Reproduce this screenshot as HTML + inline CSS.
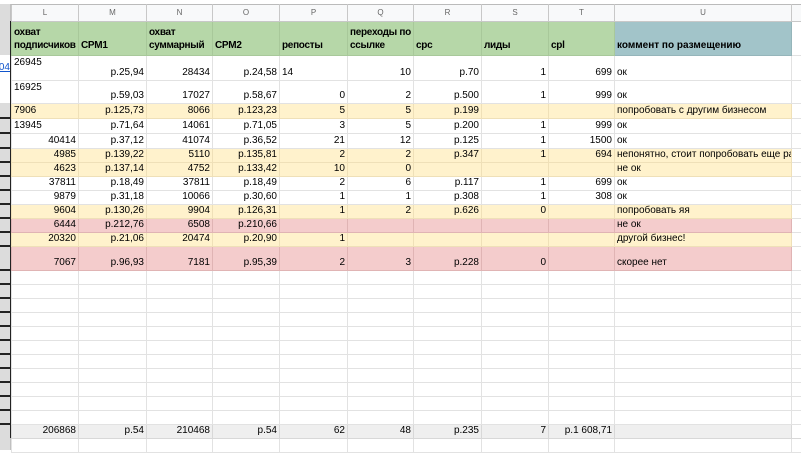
<!DOCTYPE html>
<html><head><meta charset="utf-8"><style>
body{margin:0;width:801px;height:450px;overflow:hidden;background:#fff;font-family:"Liberation Sans",Arial,sans-serif;font-size:10px;color:#000;position:relative}
#gut{position:absolute;left:0;top:4px;width:11px;height:446px;background:#dcdcdc;border-right:1px solid #c0c0c0;box-sizing:border-box}
#gut .t{position:absolute;left:0;width:11px;height:2px;background:#222}
#gut .v{position:absolute;left:10px;width:2px;background:#222}
table{position:absolute;left:11px;top:4px;width:790px;border-collapse:collapse;table-layout:fixed}
td{border:1px solid #e2e2e2;padding:0 2px 1px 2px;white-space:nowrap;overflow:hidden;text-align:right;vertical-align:bottom;line-height:12px}
tr.let td{background:#f8f9fa;border-color:#c8c8c8;text-align:center;vertical-align:middle;font-size:8px;color:#666;border-top:1px solid #bbb}
tr.hd td{background:#b6d7a8;font-weight:bold;text-align:left;border-color:#a8c89a;padding-bottom:3px;line-height:13px;font-size:10px;letter-spacing:-0.3px}
tr.hd td.u{background:#a2c4c9;border-color:#95b5ba;letter-spacing:0}
tr.hd td.x{background:#fff;border-color:#e2e2e2}
td.l{text-align:left}
td.tp{vertical-align:top;text-align:left;padding-top:1px}
tr.y td{background:#fff2cc;border-color:#efe0b8}
tr.p td{background:#f4cccc;border-color:#e0b4b4}
tr.y td.x,tr.p td.x{background:#fff;border-color:#e2e2e2}
tr.tot td{background:#efefef;border-color:#d8d8d8}
tr.tot td.x{background:#fff}
</style></head><body>
<div id="gut">
<div style="position:absolute;left:0;top:51px;width:10px;height:48px;background:#fff"></div>
<div style="position:absolute;left:0;top:59px;font-size:10px;color:#1155cc;text-decoration:underline;line-height:10px;width:10px;overflow:hidden;direction:rtl">04</div>
<div class="v" style="top:17px;height:417px"></div>
<div class="t" style="top:113px"></div><div class="t" style="top:128px"></div><div class="t" style="top:143px"></div><div class="t" style="top:157px"></div><div class="t" style="top:171px"></div><div class="t" style="top:185px"></div><div class="t" style="top:199px"></div><div class="t" style="top:213px"></div><div class="t" style="top:227px"></div><div class="t" style="top:241px"></div><div class="t" style="top:265px"></div><div class="t" style="top:279px"></div><div class="t" style="top:293px"></div><div class="t" style="top:307px"></div><div class="t" style="top:321px"></div><div class="t" style="top:335px"></div><div class="t" style="top:349px"></div><div class="t" style="top:363px"></div><div class="t" style="top:377px"></div><div class="t" style="top:391px"></div><div class="t" style="top:405px"></div><div class="t" style="top:419px"></div>
</div>
<table>
<colgroup><col style="width:67px"><col style="width:68px"><col style="width:66px"><col style="width:67px"><col style="width:68px"><col style="width:66px"><col style="width:68px"><col style="width:67px"><col style="width:66px"><col style="width:177px"><col style="width:10px"></colgroup>
<tr class="let" style="height:17px"><td>L</td><td>M</td><td>N</td><td>O</td><td>P</td><td>Q</td><td>R</td><td>S</td><td>T</td><td>U</td><td></td></tr>
<tr class="hd" style="height:34px"><td>охват<br>подписчиков</td><td>CPM1</td><td>охват<br>суммарный</td><td>CPM2</td><td>репосты</td><td>переходы по<br>ссылке</td><td>cpc</td><td>лиды</td><td>cpl</td><td class="u">коммент по размещению</td><td class="x"></td></tr>
<tr style="height:25px"><td class="tp">26945</td><td>р.25,94</td><td>28434</td><td>р.24,58</td><td class="l">14</td><td>10</td><td>р.70</td><td>1</td><td>699</td><td class="l">ок</td><td class="x"></td></tr>
<tr style="height:23px"><td class="tp">16925</td><td>р.59,03</td><td>17027</td><td>р.58,67</td><td>0</td><td>2</td><td>р.500</td><td>1</td><td>999</td><td class="l">ок</td><td class="x"></td></tr>
<tr class="y" style="height:15px"><td class="l">7906</td><td>р.125,73</td><td>8066</td><td>р.123,23</td><td>5</td><td>5</td><td>р.199</td><td></td><td></td><td class="l">попробовать с другим бизнесом</td><td class="x"></td></tr>
<tr style="height:15px"><td class="l">13945</td><td>р.71,64</td><td>14061</td><td>р.71,05</td><td>3</td><td>5</td><td>р.200</td><td>1</td><td>999</td><td class="l">ок</td><td class="x"></td></tr>
<tr style="height:15px"><td>40414</td><td>р.37,12</td><td>41074</td><td>р.36,52</td><td>21</td><td>12</td><td>р.125</td><td>1</td><td>1500</td><td class="l">ок</td><td class="x"></td></tr>
<tr class="y" style="height:14px"><td>4985</td><td>р.139,22</td><td>5110</td><td>р.135,81</td><td>2</td><td>2</td><td>р.347</td><td>1</td><td>694</td><td class="l">непонятно, стоит попробовать еще раз</td><td class="x"></td></tr>
<tr class="y" style="height:14px"><td>4623</td><td>р.137,14</td><td>4752</td><td>р.133,42</td><td>10</td><td>0</td><td></td><td></td><td></td><td class="l">не ок</td><td class="x"></td></tr>
<tr style="height:14px"><td>37811</td><td>р.18,49</td><td>37811</td><td>р.18,49</td><td>2</td><td>6</td><td>р.117</td><td>1</td><td>699</td><td class="l">ок</td><td class="x"></td></tr>
<tr style="height:14px"><td>9879</td><td>р.31,18</td><td>10066</td><td>р.30,60</td><td>1</td><td>1</td><td>р.308</td><td>1</td><td>308</td><td class="l">ок</td><td class="x"></td></tr>
<tr class="y" style="height:14px"><td>9604</td><td>р.130,26</td><td>9904</td><td>р.126,31</td><td>1</td><td>2</td><td>р.626</td><td>0</td><td></td><td class="l">попробовать яя</td><td class="x"></td></tr>
<tr class="p" style="height:14px"><td>6444</td><td>р.212,76</td><td>6508</td><td>р.210,66</td><td></td><td></td><td></td><td></td><td></td><td class="l">не ок</td><td class="x"></td></tr>
<tr class="y" style="height:14px"><td>20320</td><td>р.21,06</td><td>20474</td><td>р.20,90</td><td>1</td><td></td><td></td><td></td><td></td><td class="l">другой бизнес!</td><td class="x"></td></tr>
<tr class="p" style="height:24px"><td>7067</td><td>р.96,93</td><td>7181</td><td>р.95,39</td><td>2</td><td>3</td><td>р.228</td><td>0</td><td></td><td class="l">скорее нет</td><td class="x"></td></tr>
<tr style="height:14px"><td></td><td></td><td></td><td></td><td></td><td></td><td></td><td></td><td></td><td></td><td></td></tr>
<tr style="height:14px"><td></td><td></td><td></td><td></td><td></td><td></td><td></td><td></td><td></td><td></td><td></td></tr>
<tr style="height:14px"><td></td><td></td><td></td><td></td><td></td><td></td><td></td><td></td><td></td><td></td><td></td></tr>
<tr style="height:14px"><td></td><td></td><td></td><td></td><td></td><td></td><td></td><td></td><td></td><td></td><td></td></tr>
<tr style="height:14px"><td></td><td></td><td></td><td></td><td></td><td></td><td></td><td></td><td></td><td></td><td></td></tr>
<tr style="height:14px"><td></td><td></td><td></td><td></td><td></td><td></td><td></td><td></td><td></td><td></td><td></td></tr>
<tr style="height:14px"><td></td><td></td><td></td><td></td><td></td><td></td><td></td><td></td><td></td><td></td><td></td></tr>
<tr style="height:14px"><td></td><td></td><td></td><td></td><td></td><td></td><td></td><td></td><td></td><td></td><td></td></tr>
<tr style="height:14px"><td></td><td></td><td></td><td></td><td></td><td></td><td></td><td></td><td></td><td></td><td></td></tr>
<tr style="height:14px"><td></td><td></td><td></td><td></td><td></td><td></td><td></td><td></td><td></td><td></td><td></td></tr>
<tr style="height:14px"><td></td><td></td><td></td><td></td><td></td><td></td><td></td><td></td><td></td><td></td><td></td></tr>
<tr class="tot" style="height:14px"><td>206868</td><td>р.54</td><td>210468</td><td>р.54</td><td>62</td><td>48</td><td>р.235</td><td>7</td><td>р.1 608,71</td><td></td><td class="x"></td></tr>
<tr style="height:14px"><td></td><td></td><td></td><td></td><td></td><td></td><td></td><td></td><td></td><td></td><td></td></tr>
</table>
</body></html>
